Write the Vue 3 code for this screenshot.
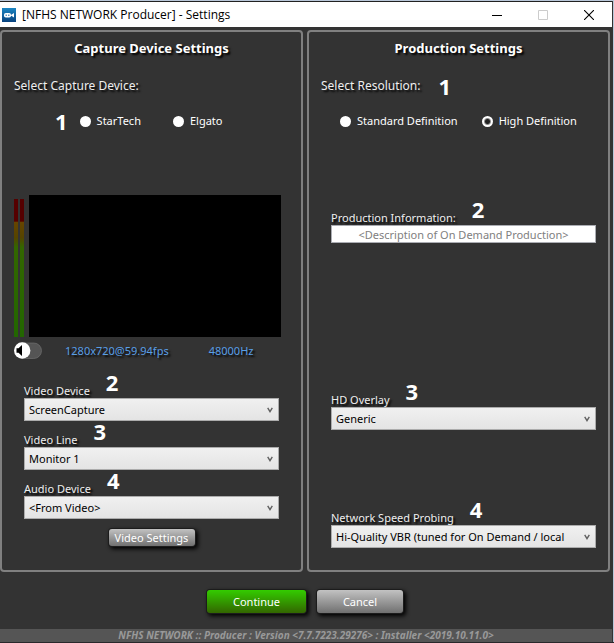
<script setup>
import { ref } from 'vue'

const captureDevice = ref('')
const resolution = ref('hd')
const description = ref('')
const muted = ref(true)

const sources = [
  { id: 'video-device', label: 'Video Device', step: 2, value: 'ScreenCapture' },
  { id: 'video-line', label: 'Video Line', step: 3, value: 'Monitor 1' },
  { id: 'audio-device', label: 'Audio Device', step: 4, value: '<From Video>' },
]
</script>

<template>
  <div class="window">
    <header class="titlebar">
      <svg class="logo" viewBox="0 0 14 14" aria-hidden="true">
        <defs>
          <linearGradient id="logo-fill" x1="0" y1="0" x2="0" y2="1">
            <stop offset="0" stop-color="#1b86c4" />
            <stop offset="1" stop-color="#08427e" />
          </linearGradient>
        </defs>
        <rect width="14" height="14" fill="url(#logo-fill)" />
        <rect x="2" y="5" width="7" height="4.5" rx="1.8" fill="#fff" />
        <path d="M8.500 7.2 12 5v4.5z" fill="#fff" />
        <path d="M3.500 7.2h1.500M6 7.2h1.500" stroke="#1b6aa5" stroke-width="1" />
      </svg>
      <h1>[NFHS NETWORK Producer] - Settings</h1>
      <div class="controls">
        <button type="button" aria-label="Minimize">
          <svg viewBox="0 0 10 10"><path d="M0 5.5h10" stroke="#000" /></svg>
        </button>
        <button type="button" aria-label="Maximize" disabled>
          <svg viewBox="0 0 10 10"><path d="M.5.5h9v9h-9z" stroke="#ccc" fill="none" /></svg>
        </button>
        <button type="button" aria-label="Close">
          <svg viewBox="0 0 10 10"><path d="M0 0 10 10M10 0 0 10" stroke="#000" stroke-width="1.1" /></svg>
        </button>
      </div>
    </header>

    <main class="panels">
      <section class="panel">
        <h2>Capture Device Settings</h2>
        <p class="prompt">Select Capture Device:</p>
        <div class="radios capture-radios" role="radiogroup" aria-label="Capture device">
          <span class="step">1</span>
          <label><input v-model="captureDevice" type="radio" name="device" value="startech" />StarTech</label>
          <label><input v-model="captureDevice" type="radio" name="device" value="elgato" />Elgato</label>
        </div>

        <div class="preview">
          <div class="meters"><i></i><i></i></div>
          <div class="screen"></div>
        </div>
        <div class="status">
          <button type="button" class="toggle" aria-label="Mute" :aria-pressed="muted" @click="muted = !muted">
            <svg viewBox="0 0 28 17">
              <rect x="1" y="1" width="26.5" height="15.5" rx="7.7" fill="#555" stroke="#777" stroke-width="0.6" />
              <circle cx="8.2" cy="8.5" r="8.2" fill="#fff" />
              <path d="M2.5 6.2H4.500L8 3v11L4.500 10.800H2.500z" fill="#000" />
            </svg>
          </button>
          <span>1280x720@59.94fps</span>
          <span>48000Hz</span>
        </div>

        <div class="sources">
          <div v-for="s in sources" :key="s.id" class="field">
            <div class="caption">
              <label :for="s.id">{{ s.label }}</label><span class="step">{{ s.step }}</span>
            </div>
            <div class="drop">
              <select :id="s.id"><option>{{ s.value }}</option></select>
              <svg viewBox="0 0 6 6"><path d="M.7.8 3 4.600 5.300.8" /></svg>
            </div>
          </div>
          <button type="button" class="btn small">Video Settings</button>
        </div>
      </section>

      <section class="panel">
        <h2>Production Settings</h2>
        <p class="prompt">Select Resolution:<span class="step">1</span></p>
        <div class="radios resolution-radios" role="radiogroup" aria-label="Resolution">
          <label><input v-model="resolution" type="radio" name="res" value="sd" />Standard Definition</label>
          <label><input v-model="resolution" type="radio" name="res" value="hd" />High Definition</label>
        </div>

        <div class="production">
          <div class="field">
            <div class="caption"><label for="info">Production Information:</label><span class="step">2</span></div>
            <input id="info" v-model="description" type="text" placeholder="<Description of On Demand Production>" />
          </div>
          <div class="field overlay">
            <div class="caption"><label for="overlay">HD Overlay</label><span class="step">3</span></div>
            <div class="drop">
              <select id="overlay"><option>Generic</option></select>
              <svg viewBox="0 0 6 6"><path d="M.7.8 3 4.600 5.300.8" /></svg>
            </div>
          </div>
          <div class="field probing">
            <div class="caption"><label for="probing">Network Speed Probing</label><span class="step">4</span></div>
            <div class="drop">
              <select id="probing"><option>Hi-Quality VBR (tuned for On Demand / local</option></select>
              <svg viewBox="0 0 6 6"><path d="M.7.8 3 4.600 5.300.8" /></svg>
            </div>
          </div>
        </div>
      </section>
    </main>

    <div class="actions">
      <button type="button" class="btn go">Continue</button>
      <button type="button" class="btn">Cancel</button>
    </div>
    <footer>NFHS NETWORK :: Producer : Version &lt;7.7.7223.29276&gt; : Installer &lt;2019.10.11.0&gt;</footer>
  </div>
</template>

<style>
body {
  margin: 0;
  background: #29282b;
}
</style>

<style scoped>
* {
  box-sizing: border-box;
}
.window {
  display: flex;
  flex-direction: column;
  min-height: calc(100vh - 1px);
  border-top: 1px solid #b9c7d9;
  border-right: 1px solid #b9c7d9;
  background: #333;
  color: #fff;
  font: 11px/16px "Noto Sans", "Open Sans", sans-serif;
}
button, input, select {
  font: inherit;
}
.titlebar {
  display: flex;
  align-items: center;
  height: 26px;
  padding-left: 2px;
  border-top: 1px solid #222;
  margin-right: 1px;
  background: #fff;
  color: #000;
}
.logo {
  width: 14px;
  height: 14px;
}
h1 {
  margin: 0 auto 0 6px;
  font: 400 12px/16px "Open Sans", sans-serif;
}
.controls {
  display: flex;
}
.controls button {
  display: grid;
  place-items: center;
  width: 46px;
  height: 24px;
  padding: 0;
  border: 0;
  background: none;
}
.controls svg {
  width: 10px;
  height: 10px;
}
.panels {
  display: grid;
  grid-template-columns: 1fr 1fr;
  gap: 4px;
  padding: 3px 3px 0 0;
}
.panel {
  display: flex;
  flex-direction: column;
  min-width: 0;
  padding: 8px 12px 22px;
  border: 2px solid #808080;
  border-radius: 4px;
}
h2 {
  margin: 0;
  font-size: 13px;
  line-height: 16px;
  text-align: center;
  text-shadow: 2px 2px 2px #000;
}
.prompt {
  display: flex;
  height: 16px;
  margin: 22px 0 0;
  font-size: 12px;
  line-height: 16px;
  color: #eee;
  text-shadow: 2px 2px 2px #000;
}
.step {
  font: bold 22px/16px "Open Sans", sans-serif;
  color: #fff;
  text-shadow: none;
}
.prompt .step {
  margin-left: 18px;
}
.radios {
  display: flex;
  align-items: center;
  margin-top: 19px;
}
.radios label {
  display: flex;
  align-items: center;
  gap: 6px;
}
.radios input {
  appearance: none;
  width: 11px;
  height: 11px;
  margin: 0;
  border-radius: 50%;
  background: #fff;
}
.radios input:checked {
  background: radial-gradient(circle, #222 2px, #fff 4px);
}
.capture-radios {
  padding-left: 41px;
}
.capture-radios label {
  margin-left: 12px;
}
.capture-radios label + label {
  margin-left: 32px;
}
.resolution-radios {
  padding-left: 19px;
  gap: 24px;
}
.preview {
  display: flex;
  gap: 5px;
  margin: 66px 8px 0 0;
}
.meters {
  display: flex;
  gap: 2px;
  padding-top: 4px;
}
.meters i {
  width: 4px;
  background: linear-gradient(#500 0 16%, #640 17%, #540 28%, #360 35%, #260 100%);
}
.screen {
  flex: 1;
  height: 142px;
  background: #000;
}
.status {
  display: flex;
  align-items: center;
  gap: 40px;
  margin-top: 5px;
  color: #5a9fe6;
  text-shadow: 2px 2px 2px #000;
}
.toggle {
  width: 28px;
  height: 17px;
  margin-right: -17px;
  padding: 0;
  border: 0;
  background: none;
}
.toggle svg {
  display: block;
}
.sources {
  display: flex;
  flex-direction: column;
  align-items: center;
  gap: 10px;
  margin: 23px 10px 0;
}
.field {
  width: 100%;
}
.caption {
  display: flex;
  height: 16px;
  line-height: 18px;
  color: #eee;
  text-shadow: 2px 2px 2px #000;
}
.caption .step {
  position: relative;
  top: -8px;
  margin-left: 16px;
}
.drop {
  display: grid;
  align-items: center;
}
.drop > * {
  grid-area: 1 / 1;
}
.drop select {
  appearance: none;
  width: 100%;
  height: 23px;
  padding: 0 20px 0 4px;
  border: 1px solid #acacac;
  border-radius: 0;
  background: linear-gradient(#f0f0f0, #e4e4e4);
  color: #000;
}
.drop svg {
  justify-self: end;
  width: 6px;
  height: 6px;
  margin-right: 6px;
  fill: none;
  stroke: #606060;
  stroke-width: 1.4;
  pointer-events: none;
}
.production {
  margin: 80px 0 0 10px;
}
.production input {
  display: block;
  width: 100%;
  height: 18px;
  padding: 0;
  border: 1px solid #abadb3;
  background: #fff;
  color: #000;
  text-align: center;
}
.production input::placeholder {
  color: #808080;
  opacity: 1;
}
.overlay {
  margin-top: 148px;
}
.probing {
  margin-top: 79px;
}
.btn {
  width: 86px;
  height: 23px;
  padding: 0;
  border: 0;
  border-radius: 3px;
  background: linear-gradient(#c2c2c2, #707070);
  box-shadow: 0 0 0 1px #1c1c1c, 2px 2px 4px 1px #000;
  color: #fff;
}
.btn.small {
  height: 17px;
  line-height: 16px;
}
.btn.go {
  width: 99px;
  background: linear-gradient(#3c0, #360);
}
.actions {
  display: flex;
  justify-content: center;
  gap: 11px;
  margin: 18px 3px 16px 0;
}
footer {
  margin: auto 1px 0 0;
  background: #555;
  color: #999;
  font-size: 10px;
  font-style: italic;
  font-weight: 700;
  line-height: 13px;
  text-align: center;
}
</style>
